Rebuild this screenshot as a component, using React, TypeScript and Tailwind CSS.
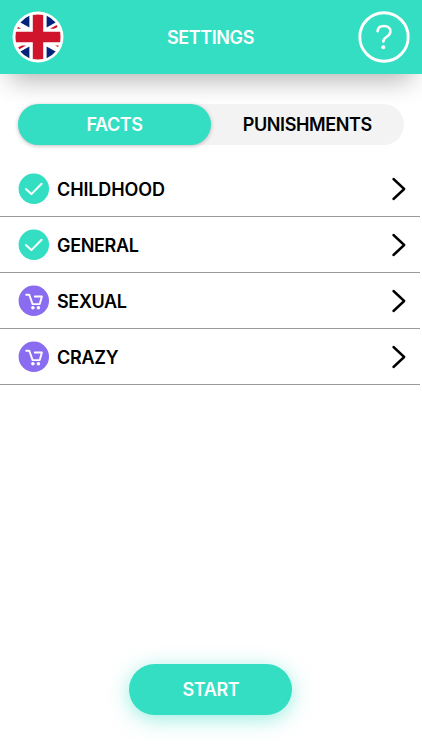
import React from "react";

const categories = [
  { name: "CHILDHOOD", owned: true, tracking: "tracking-[-0.12px]" },
  { name: "GENERAL", owned: true, tracking: "tracking-[-0.35px]" },
  { name: "SEXUAL", owned: false, tracking: "tracking-[-0.35px]" },
  { name: "CRAZY", owned: false, tracking: "tracking-[-0.3px]" },
];

function Flag() {
  return (
    <svg width="52" height="52" viewBox="-26 -26 52 52" className="block">
      <circle r="25.5" fill="#fff" />
      <g fill="#04247c">
        <path d="M-8.6-21.3V-9.4L-17.6-14.6Q-13.8-19.2-8.6-21.3Z" />
        <path d="M8.6-21.3V-9.4L17.6-14.6Q13.8-19.2 8.6-21.3Z" />
        <path d="M-8.6 21.3V9.4L-17.6 14.6Q-13.8 19.2-8.6 21.3Z" />
        <path d="M8.6 21.3V9.4L17.6 14.6Q13.8 19.2 8.6 21.3Z" />
      </g>
      <g fill="#cf142b">
        <path d="M-20-10.2L-17-8.2H-20.8Z" />
        <path d="M12-8.2L18.6-12L19.7-10L16-8.2Z" />
        <path d="M-12 8.4L-18.6 12.2L-19.8 10.2L-16 8.4Z" />
        <path d="M20 10L17 8.4H20.8Z" />
        <path d="M-5.2-22.1Q0-23 5.2-22.1V-5.2H22.1Q23 0 22.1 5.2H5.2V22.1Q0 23-5.2 22.1V5.2H-22.1Q-23 0-22.1-5.2H-5.2Z" />
      </g>
    </svg>
  );
}

function Help() {
  return (
    <svg width="52" height="52" viewBox="-26 -26 52 52" fill="none" stroke="#fff" className="block">
      <circle r="24.2" strokeWidth="2.9" />
      <path d="M-6.4-5.9C-6.2-9.2-3.8-11 0-11C3.9-11 6.4-8.8 6.4-5.7C6.4-3 4.9-1.5 2.5 0C.2 1.4-.6 2.2-.6 4.4" strokeWidth="2.6" strokeLinecap="round" />
      <circle cx="-.7" cy="10.3" r="2" fill="#fff" stroke="none" />
    </svg>
  );
}

function Badge({ owned }: { owned: boolean }) {
  return (
    <svg width="31" height="31" viewBox="0 -0.3 31 31" fill="none" stroke="#fff" className="block shrink-0">
      <circle cx="15.8" cy="15.5" r="15.2" fill={owned ? "#33dec3" : "#896cf0"} stroke="none" />
      {owned ? (
        <path d="M7.9 15.8L13.4 20.8L23.6 10.4" strokeWidth="2" strokeLinecap="round" strokeLinejoin="round" />
      ) : (
        <>
          <path d="M8.2 9.4H11.3L14.6 18.8H21.7L23.9 11.2H16.8" strokeWidth="1.9" strokeLinecap="round" strokeLinejoin="round" />
          <circle cx="14.9" cy="22.5" r="1.8" fill="#fff" stroke="none" />
          <circle cx="20.4" cy="22.5" r="1.8" fill="#fff" stroke="none" />
        </>
      )}
    </svg>
  );
}

export default function App() {
  return (
    <div className="flex h-[750px] w-[422px] flex-col overflow-hidden bg-white font-['Inter',sans-serif] text-[18px] font-semibold text-black">
      <header className="flex h-[73.5px] shrink-0 items-center justify-between bg-[#33dec3] px-[12px] text-white shadow-[0_16px_26px_-10px_rgba(0,0,0,0.3)]">
        <Flag />
        <h1 className="pt-px pr-px tracking-[-0.4px]">SETTINGS</h1>
        <Help />
      </header>

      <div className="mt-[30.5px] ml-[18px] flex h-[41px] w-[385.5px] shrink-0 rounded-full bg-[#f3f3f3]">
        <button className="w-[193px] rounded-full bg-[#33dec3] tracking-[-0.4px] text-white shadow-[0_1px_4px_rgba(0,0,0,0.25)]">FACTS</button>
        <button className="flex-1 tracking-[-0.4px]">PUNISHMENTS</button>
      </div>

      <ul className="mt-[16px] w-[420px]">
        {categories.map((c) => (
          <li key={c.name} className="flex h-[56px] items-center border-b border-[#999] pl-[18px]">
            <Badge owned={c.owned} />
            <span className={`ml-2 flex-1 pt-[2px] ${c.tracking}`}>{c.name}</span>
            <svg width="16" height="24" viewBox="0 0 16 24" fill="none" stroke="#000" strokeWidth="2.4" strokeLinecap="round" strokeLinejoin="round" className="mr-[13px]">
              <path d="M2.5 2L13.2 12L2.5 22" />
            </svg>
          </li>
        ))}
      </ul>

      <button className="mt-auto mb-[35px] ml-[129.4px] h-[51px] w-[163px] shrink-0 rounded-full bg-[#33dec3] tracking-[-0.4px] text-white shadow-[0_4px_20px_rgba(51,222,195,0.5)]">START</button>
    </div>
  );
}
